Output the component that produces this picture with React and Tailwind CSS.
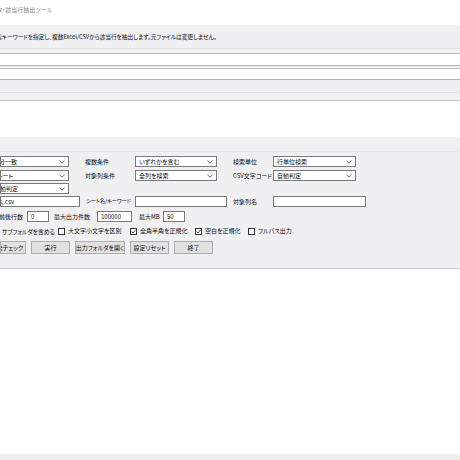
import React from 'react';

const font = "font-['Noto_Sans_CJK_JP','Noto_Sans',sans-serif] [font-feature-settings:'palt']";

function Chevron() {
  return (
    <svg width="6" height="4" viewBox="0 0 6 4" className="shrink-0">
      <path d="M0.5 0.8 L3 3.2 L5.5 0.8" fill="none" stroke="#444" strokeWidth="0.8" />
    </svg>
  );
}

function Select({ w, text, shift = 'pl-[3px]' }) {
  return (
    <div className={`${w} h-[11px] bg-white border border-[#7a7a7a] flex items-center justify-between pr-[3px] overflow-hidden`}>
      <span className={`leading-none ${shift}`}>{text}</span>
      <Chevron />
    </div>
  );
}

function Input({ w, text, shift = 'pl-[3px]' }) {
  return (
    <div className={`${w} h-[11px] bg-white border border-[#7a7a7a] flex items-center overflow-hidden`}>
      <span className={`leading-none ${shift}`}>{text}</span>
    </div>
  );
}

function Check({ on, label }) {
  return (
    <div className="flex items-center gap-[3px]">
      <div className="w-[7px] h-[7px] border border-[#333] bg-white flex items-center justify-center shrink-0">
        {on && (
          <svg width="5" height="5" viewBox="0 0 5 5">
            <path d="M0.6 2.6 L2 4 L4.5 0.9" fill="none" stroke="#222" strokeWidth="0.8" />
          </svg>
        )}
      </div>
      <span className="leading-none">{label}</span>
    </div>
  );
}

function Btn({ w, text, shift = '' }) {
  return (
    <div className={`${w} h-[13px] bg-[#e1e1e1] border border-[#adadad] flex items-center justify-center overflow-hidden shrink-0`}>
      <span className={`leading-none ${shift}`}>{text}</span>
    </div>
  );
}

export default function App() {
  return (
    <div className={`${font} w-[460px] h-[460px] overflow-hidden bg-white text-[6px] text-[#111] whitespace-nowrap flex flex-col`}>
      <div className="h-[25px] bg-white pt-[5px] overflow-hidden">
        <span className="block -ml-[3px] text-[#8a8a8a]">タ・該当行抽出ツール</span>
      </div>

      <div className="h-[24px] bg-[#f0eff2] border-b border-[#dedde0] flex items-center overflow-hidden">
        <span className="block -ml-[4px] pt-[1px] text-[5.7px]">索キーワードを指定し、複数Excel/CSVから該当行を抽出します。元ファイルは変更しません。</span>
      </div>
      <div className="h-[5px] bg-[#f0eff2] border-b border-[#b9b9b9]" />
      <div className="h-[12px] bg-white border-b border-[#b4b4b4]" />
      <div className="h-[3px] bg-[#ececec] border-b border-[#c4c4c4]" />
      <div className="h-[11px] bg-white border-b border-[#b4b4b4]" />
      <div className="h-[13px] bg-[#f0eff2] border-b border-[#e2e1e4]" />
      <div className="h-[8px] bg-[#f0eff2] border-b border-[#bdbdbd]" />
      <div className="h-[36px] bg-white" />

      <div className="h-[15px] bg-[#f0eff2] border-b border-[#e4e3e6]" />
      <div className="bg-[#f0eff2] flex flex-col pt-[4px] h-[117px] border-b border-[#c9c9c9]">
        <div className="flex items-center h-[11px]">
          <div className="w-[85px] shrink-0"><Select w="w-[69px]" text="部分一致" shift="-ml-[8px]" /></div>
          <div className="w-[50px] shrink-0">複数条件</div>
          <div className="w-[98px] shrink-0"><Select w="w-[82px]" text="いずれかを含む" /></div>
          <div className="w-[40px] shrink-0">検索単位</div>
          <Select w="w-[83px]" text="行単位検索" />
        </div>
        <div className="flex items-center h-[11px] mt-[3px]">
          <div className="w-[85px] shrink-0"><Select w="w-[69px]" text="全シート" shift="-ml-[10px]" /></div>
          <div className="w-[50px] shrink-0">対象列条件</div>
          <div className="w-[98px] shrink-0"><Select w="w-[82px]" text="全列を検索" /></div>
          <div className="w-[40px] shrink-0">CSV文字コード</div>
          <Select w="w-[83px]" text="自動判定" />
        </div>
        <div className="flex items-center h-[11px] mt-[2px]">
          <Select w="w-[69px]" text="自動判定" shift="-ml-[7px]" />
        </div>
        <div className="flex items-center h-[11px] mt-[2px]">
          <div className="w-[86px] shrink-0"><Input w="w-[80px]" text="s,.csv" shift="-ml-[2px]" /></div>
          <div className="w-[49px] shrink-0 text-[5.4px] tracking-[-0.2px]">シート名/キーワード</div>
          <div className="w-[98px] shrink-0"><Input w="w-[92px]" text="" /></div>
          <div className="w-[40px] shrink-0">対象列名</div>
          <Input w="w-[93px]" text="" />
        </div>
        <div className="flex items-center h-[11px] mt-[4px]">
          <div className="w-[27px] shrink-0 overflow-hidden"><span className="block -ml-[1px]">前後行数</span></div>
          <div className="w-[27px] shrink-0"><Input w="w-[22px]" text="0" /></div>
          <div className="w-[43px] shrink-0">最大出力件数</div>
          <div className="w-[42px] shrink-0"><Input w="w-[35px]" text="100000" /></div>
          <div className="w-[24px] shrink-0">最大MB</div>
          <Input w="w-[22px]" text="50" />
        </div>
        <div className="flex items-center h-[10px] mt-[4px]">
          <div className="w-[58px] shrink-0 pl-[2px] tracking-[-0.2px]">サブフォルダを含める</div>
          <div className="w-[72px] shrink-0"><Check label="大文字小文字を区別" /></div>
          <div className="w-[65px] shrink-0"><Check on label="全角半角を正規化" /></div>
          <div className="w-[53px] shrink-0"><Check on label="空白を正規化" /></div>
          <Check label="フルパス出力" />
        </div>
        <div className="flex items-center gap-[5px] mt-[5px]">
          <Btn w="w-[26px]" text="全チェック" shift="-ml-[6px]" />
          <Btn w="w-[39px]" text="実行" />
          <Btn w="w-[50px]" text="出力フォルダを開く" />
          <Btn w="w-[39px]" text="設定リセット" />
          <Btn w="w-[39px]" text="終了" />
        </div>
      </div>

      <div className="h-[185px] bg-white shrink-0" />
      <div className="flex-1 bg-[#f0eff2]" />
    </div>
  );
}
